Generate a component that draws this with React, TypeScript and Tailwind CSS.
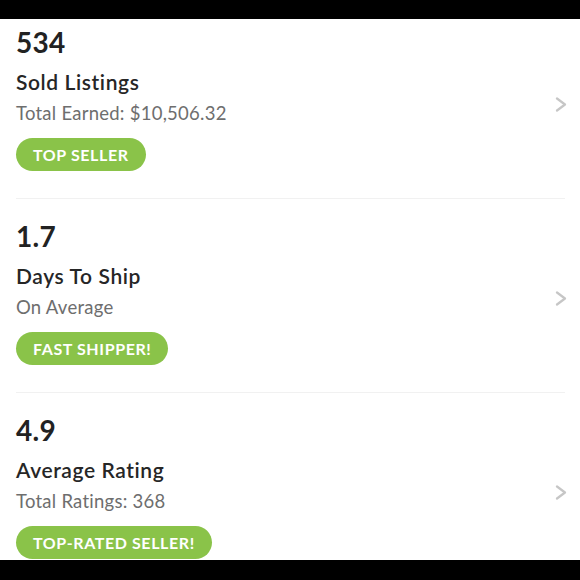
import React from 'react';

type Stat = {
  value: string;
  title: string;
  subtitle: string;
  badge: string;
};

const stats: Stat[] = [
  {
    value: '534',
    title: 'Sold Listings',
    subtitle: 'Total Earned: $10,506.32',
    badge: 'Top Seller',
  },
  {
    value: '1.7',
    title: 'Days To Ship',
    subtitle: 'On Average',
    badge: 'Fast Shipper!',
  },
  {
    value: '4.9',
    title: 'Average Rating',
    subtitle: 'Total Ratings: 368',
    badge: 'Top-Rated Seller!',
  },
];

const Chevron = () => (
  <svg
    width="12"
    height="15"
    viewBox="0 0 12 15"
    fill="none"
    className="mt-[12px] -mr-[2px] shrink-0"
  >
    <polyline
      points="2,1.5 10,7.5 2,13.5"
      stroke="#c6c6c6"
      strokeWidth="2.2"
      strokeLinecap="round"
      strokeLinejoin="round"
    />
  </svg>
);

const StatRow = ({ stat, first }: { stat: Stat; first?: boolean }) => (
  <div
    className={
      first
        ? 'flex items-center border-b border-[#f1f1f1] pt-[7px] pb-[27px]'
        : 'flex items-center border-b border-[#f1f1f1] pt-[21px] pb-[27px]'
    }
  >
    <div className="flex flex-1 flex-col items-start">
      <p className="text-[28px] leading-[32px] font-bold tracking-[0.3px] text-[#222]">
        {stat.value}
      </p>
      <p className="mt-[12px] text-[21px] leading-[24px] font-semibold tracking-[0.6px] text-[#262626]">
        {stat.title}
      </p>
      <p className="mt-[7px] text-[18.5px] leading-[24px] tracking-[0.25px] text-[#6e6e6e]">
        {stat.subtitle}
      </p>
      <span className="mt-[13px] flex h-[33px] items-center rounded-full bg-[#8ac349] px-[17px] text-[16px] font-bold uppercase tracking-[0.6px] text-white">
        {stat.badge}
      </span>
    </div>
    <Chevron />
  </div>
);

export default function App() {
  return (
    <div
      className="flex h-[580px] w-[580px] flex-col overflow-hidden bg-black"
      style={{ fontFamily: 'Lato, "Noto Sans", sans-serif' }}
    >
      <div className="h-[19px] shrink-0" />
      <div className="flex-1 overflow-hidden bg-white">
        <div className="ml-4 mr-[15px]">
          {stats.map((s, i) => (
            <StatRow key={s.value} stat={s} first={i === 0} />
          ))}
        </div>
      </div>
      <div className="h-[20px] shrink-0" />
    </div>
  );
}
